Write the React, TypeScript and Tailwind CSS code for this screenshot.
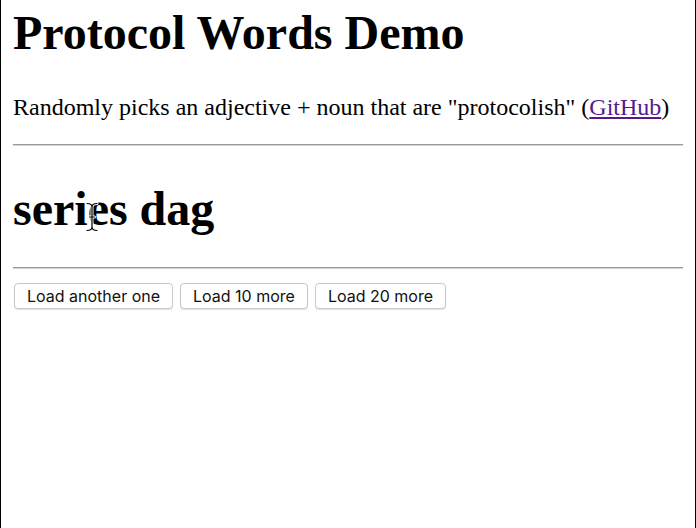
import React from "react"

const serif = "font-['Liberation_Serif','Times_New_Roman',serif]"

function IBeam() {
  return (
    <svg className="absolute left-[84px] top-[201px]" width="14" height="32" viewBox="0 0 14 32" fill="none">
      <path d="M2 2.5 C5 2.5 7 3.5 7 6 C7 3.5 9 2.5 12 2.5 M7 6 V26 C7 28.5 5 29.5 2 29.5 M7 26 C7 28.5 9 29.5 12 29.5 M4.5 16 H9.5" stroke="white" strokeWidth="3" strokeLinecap="round" />
      <path d="M2 2.5 C5 2.5 7 3.5 7 6 C7 3.5 9 2.5 12 2.5 M7 6 V26 C7 28.5 5 29.5 2 29.5 M7 26 C7 28.5 9 29.5 12 29.5 M4.5 16 H9.5" stroke="black" strokeWidth="1.2" strokeLinecap="round" />
    </svg>
  )
}

function Rule() {
  return <div className="h-[2px] border-t border-b border-t-[#9a9a9a] border-b-[#d6d6d6]" />
}

function Btn({ children }: { children: React.ReactNode }) {
  return (
    <button className="h-[26px] rounded-[4px] border border-[#c9c9c9] bg-white px-[12px] font-['Inter','Liberation_Sans',Arial,sans-serif] text-[16px] leading-none text-[#111] shadow-[0_1px_1px_rgba(0,0,0,0.12)]">
      {children}
    </button>
  )
}

export default function App() {
  return (
    <div className={`relative min-h-[528px] border-x border-x-black bg-white px-[12px] text-black ${serif}`}>
      <h1 className="pt-[5px] text-[48px] font-bold leading-[55px]">Protocol Words Demo</h1>
      <p className="mt-[33px] text-[24px] leading-[28px]">
        Randomly picks an adjective + noun that are "protocolish" (
        <a href="#" className="text-[#551a8b] underline">GitHub</a>)
      </p>
      <div className="mt-[23px]">
        <Rule />
      </div>
      <h2 className="mt-[35px] text-[48px] font-bold leading-[55px]">series dag</h2>
      <div className="mt-[31px]">
        <Rule />
      </div>
      <div className="mt-[14px] flex gap-[7px] pl-[1px]">
        <Btn>Load another one</Btn>
        <Btn>Load 10 more</Btn>
        <Btn>Load 20 more</Btn>
      </div>
      <IBeam />
    </div>
  )
}
